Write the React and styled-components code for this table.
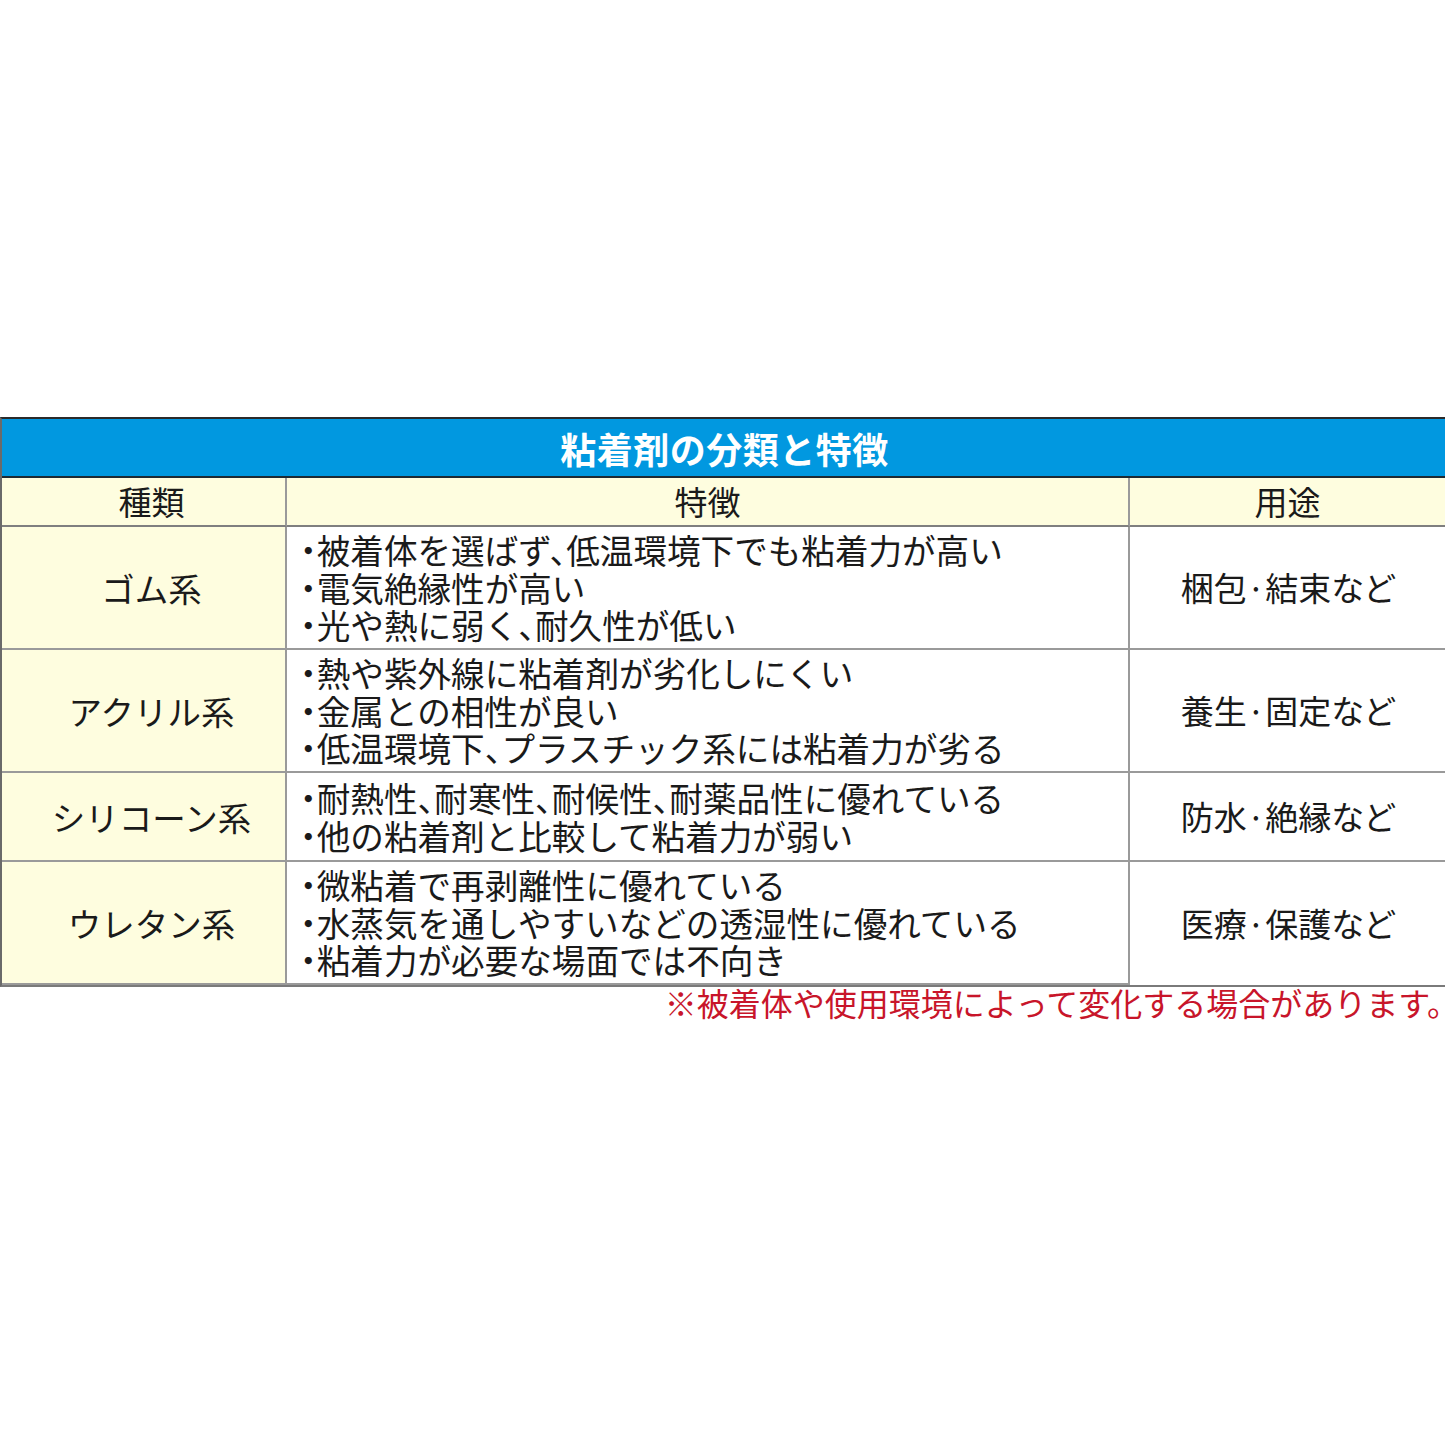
import React from 'react';
import styled, { createGlobalStyle } from 'styled-components';

const GlobalStyle = createGlobalStyle`
  html, body {
    margin: 0;
    padding: 0;
    background: #ffffff;
  }
  body {
    font-family: "Noto Sans CJK JP", "Noto Sans", sans-serif;
    color: #1a1a1a;
  }
`;

const rows = [
  {
    kind: 'ゴム系',
    features: ['被着体を選ばず、低温環境下でも粘着力が高い', '電気絶縁性が高い', '光や熱に弱く、耐久性が低い'],
    use: '梱包·結束など',
    height: 123,
  },
  {
    kind: 'アクリル系',
    features: ['熱や紫外線に粘着剤が劣化しにくい', '金属との相性が良い', '低温環境下、プラスチック系には粘着力が劣る'],
    use: '養生·固定など',
    height: 123,
  },
  {
    kind: 'シリコーン系',
    features: ['耐熱性、耐寒性、耐候性、耐薬品性に優れている', '他の粘着剤と比較して粘着力が弱い'],
    use: '防水·絶縁など',
    height: 89,
  },
  {
    kind: 'ウレタン系',
    features: ['微粘着で再剥離性に優れている', '水蒸気を通しやすいなどの透湿性に優れている', '粘着力が必要な場面では不向き'],
    use: '医療·保護など',
    height: 123,
  },
];

const App = () => {
  return (
    <Page>
      <GlobalStyle />
      <Table>
        <TitleBar>粘着剤の分類と特徴</TitleBar>
        <Grid $rows={rows.map((r) => r.height)}>
          <KindHead>種類</KindHead>
          <HeadCell>特徴</HeadCell>
          <HeadCell $last>用途</HeadCell>
          {rows.map((row) => (
            <React.Fragment key={row.kind}>
              <KindCell>{row.kind}</KindCell>
              <FeatureCell>
                {row.features.map((f) => (
                  <FeatureLine key={f}>{`・${f}`}</FeatureLine>
                ))}
              </FeatureCell>
              <UseCell>{row.use}</UseCell>
            </React.Fragment>
          ))}
        </Grid>
      </Table>
      <Note>※被着体や使用環境によって変化する場合があります。</Note>
    </Page>
  );
};

const Page = styled.div`
  width: 1445px;
  height: 1445px;
  padding-top: 417px;
  box-sizing: border-box;
  overflow: hidden;
`;

const Table = styled.div`
  border-top: 2px solid #2a2a2a;
  border-bottom: 2px solid #7a7a7a;
  border-left: 2px solid #6a6a6a;
`;

const TitleBar = styled.div`
  height: 57px;
  background: #0198e0;
  border-bottom: 2px solid #1d2a33;
  display: flex;
  align-items: center;
  justify-content: center;
  color: #ffffff;
  font-size: 36px;
  font-weight: 700;
  letter-spacing: 0.5px;
  padding-left: 2px;
`;

const Grid = styled.div`
  display: grid;
  grid-template-columns: 285px 843px 1fr;
  grid-template-rows: 49px ${(p) => p.$rows.map((h) => `${h}px`).join(' ')};
`;

const Cell = styled.div`
  box-sizing: border-box;
  border-bottom: 2px solid #9a9a9a;
  display: flex;
  align-items: center;
  font-size: 33px;
  line-height: 37.5px;
  &:last-child {
    border-bottom: none;
  }
`;

const HeadCell = styled(Cell)`
  background: #fefddf;
  justify-content: center;
  border-right: ${(p) => (p.$last ? 'none' : '2px solid #9a9a9a')};
  border-bottom-color: #7f7f7f;
`;

const KindHead = styled(HeadCell)`
  padding-left: 16px;
`;

const KindCell = styled(Cell)`
  background: #fefddf;
  justify-content: center;
  padding-left: 16px;
  font-size: 33.5px;
  border-right: 2px solid #9a9a9a;
`;

const FeatureCell = styled(Cell)`
  flex-direction: column;
  align-items: flex-start;
  justify-content: center;
  padding-left: 13px;
  border-right: 2px solid #9a9a9a;
`;

const FeatureLine = styled.div`
  white-space: nowrap;
  font-size: 33.6px;
  font-feature-settings: "halt";
`;

const UseCell = styled(Cell)`
  justify-content: center;
  font-feature-settings: "palt";
`;

const Note = styled.div`
  text-align: right;
  color: #c8152a;
  font-size: 32px;
  line-height: 38px;
  margin-top: -4px;
  white-space: nowrap;
  margin-right: -14px;
`;

export default App;
